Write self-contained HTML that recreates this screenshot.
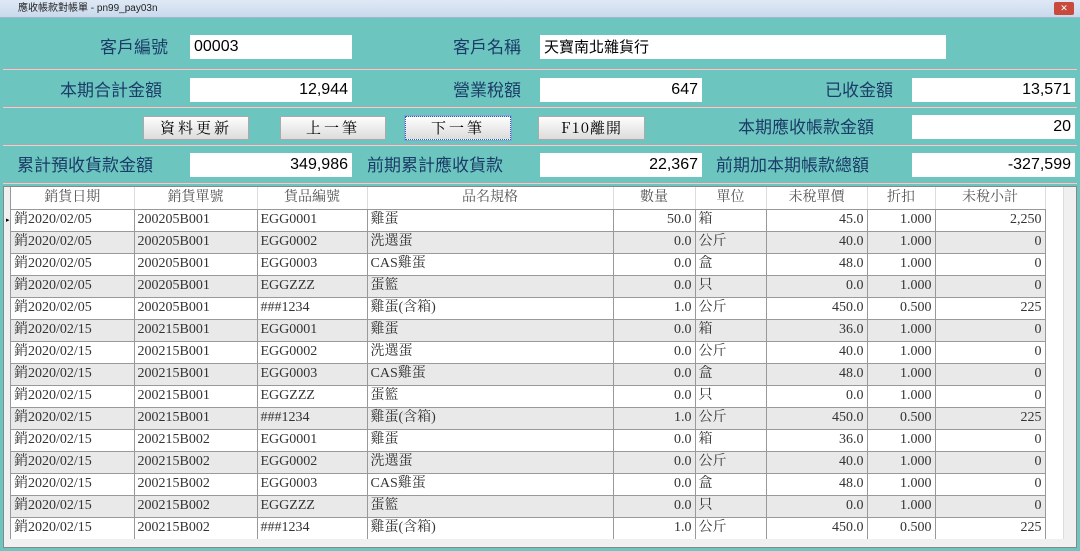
<!DOCTYPE html>
<html><head><meta charset="utf-8"><style>
*{margin:0;padding:0;box-sizing:border-box}
body{width:1080px;height:551px;overflow:hidden;background:#6dc5c0;font-family:"Liberation Sans","Noto Sans CJK TC",sans-serif;position:relative}
.title{position:absolute;left:0;top:0;width:1080px;height:18px;background:linear-gradient(#dfe9f5,#c9d9ec);font-size:10px;color:#222;line-height:18px;padding-left:18px;border-bottom:1px solid #9fb5cc}
.x{position:absolute;right:6px;top:2px;width:20px;height:13px;background:#c9493c;border-radius:2px;color:#fff;font-size:9px;text-align:center;line-height:13px}
.sep{position:absolute;left:3px;width:1074px;height:2px;background:#a9a9a9;border-bottom:1px solid #d8d8d8}
.lbl{position:absolute;font-size:17px;color:#1b3c66;font-family:"Noto Sans CJK TC",sans-serif;line-height:24px;white-space:nowrap}
.inp{position:absolute;height:24px;background:#fff;font-size:16px;line-height:24px;padding:0 4px;color:#000}
.r{text-align:right}
.btn{position:absolute;height:24px;background:linear-gradient(#fdfdfd,#dcdcdc);border:1px solid #aaa;font-family:"Noto Serif CJK SC",serif;font-size:15px;text-align:center;line-height:22px;letter-spacing:3px}
.grid{position:absolute;left:3px;top:186px;width:1074px;height:362px;background:#fff;border:1px solid #888;overflow:hidden}
table{border-collapse:collapse;position:absolute;left:7px;top:0;font-family:"Liberation Serif","Noto Serif CJK SC",serif;font-size:14px;table-layout:fixed}
td{height:22px;line-height:20px;border-right:1px solid #999;border-bottom:1px solid #999;padding:0 3px;white-space:nowrap;overflow:hidden;color:#333;vertical-align:middle}
th{height:22px;line-height:20px;font-weight:normal;color:#555;border-right:1px solid #ddd;border-bottom:1px solid #999;font-size:14px}
tbody tr:nth-child(even) td{background:#e9e9e9}
.vs{position:absolute;left:1059px;top:0;width:14px;height:353px;background:#f0f0f0;border-left:1px solid #ddd}
.hs{position:absolute;left:0;top:352px;width:1074px;height:9px;background:#f0f0f0}
</style></head><body>
<div class="title">應收帳款對帳單 - pn99_pay03n<div class="x">✕</div></div>
<div class="sep" style="top:68px"></div>
<div class="sep" style="top:106px"></div>
<div class="sep" style="top:144px"></div>
<div class="sep" style="top:182px"></div>

<div class="lbl" style="left:100px;top:34px">客戶編號</div>
<div class="inp" style="left:190px;top:35px;width:162px">00003</div>
<div class="lbl" style="left:453px;top:34px">客戶名稱</div>
<div class="inp" style="left:540px;top:35px;width:406px;font-family:'Noto Sans CJK TC',sans-serif;font-size:15px">天寶南北雜貨行</div>

<div class="lbl" style="left:60px;top:77px">本期合計金額</div>
<div class="inp r" style="left:190px;top:78px;width:162px">12,944</div>
<div class="lbl" style="left:453px;top:77px">營業稅額</div>
<div class="inp r" style="left:540px;top:78px;width:162px">647</div>
<div class="lbl" style="left:825px;top:77px">已收金額</div>
<div class="inp r" style="left:912px;top:78px;width:163px">13,571</div>

<div class="btn" style="left:143px;top:116px;width:106px">資料更新</div>
<div class="btn" style="left:280px;top:116px;width:106px">上一筆</div>
<div class="btn" style="left:405px;top:116px;width:106px;border:1px dotted #2a5fa8;outline:1px solid #7aa6d8">下一筆</div>
<div class="btn" style="left:538px;top:116px;width:107px;letter-spacing:1px">F10離開</div>
<div class="lbl" style="left:738px;top:114px">本期應收帳款金額</div>
<div class="inp r" style="left:912px;top:115px;width:163px">20</div>

<div class="lbl" style="left:17px;top:152px">累計預收貨款金額</div>
<div class="inp r" style="left:190px;top:153px;width:162px">349,986</div>
<div class="lbl" style="left:367px;top:152px">前期累計應收貨款</div>
<div class="inp r" style="left:540px;top:153px;width:162px">22,367</div>
<div class="lbl" style="left:716px;top:152px">前期加本期帳款總額</div>
<div class="inp r" style="left:912px;top:153px;width:163px">-327,599</div>

<div class="grid">
<div style="position:absolute;left:0;top:0;width:7px;height:353px;background:#f0f0f0;border-right:1px solid #999"></div>
<div style="position:absolute;left:2px;top:29px;font-size:7px;color:#000">▸</div>
<table>
<colgroup><col style="width:123px"><col style="width:123px"><col style="width:110px"><col style="width:246px"><col style="width:82px"><col style="width:71px"><col style="width:101px"><col style="width:68px"><col style="width:110px"></colgroup>
<thead><tr><th>銷貨日期</th><th>銷貨單號</th><th>貨品編號</th><th>品名規格</th><th>數量</th><th>單位</th><th>未稅單價</th><th>折扣</th><th>未稅小計</th></tr></thead>
<tbody>
<tr><td>銷2020/02/05</td><td>200205B001</td><td>EGG0001</td><td>雞蛋</td><td class="r">50.0</td><td>箱</td><td class="r">45.0</td><td class="r">1.000</td><td class="r">2,250</td></tr>
<tr><td>銷2020/02/05</td><td>200205B001</td><td>EGG0002</td><td>洗選蛋</td><td class="r">0.0</td><td>公斤</td><td class="r">40.0</td><td class="r">1.000</td><td class="r">0</td></tr>
<tr><td>銷2020/02/05</td><td>200205B001</td><td>EGG0003</td><td>CAS雞蛋</td><td class="r">0.0</td><td>盒</td><td class="r">48.0</td><td class="r">1.000</td><td class="r">0</td></tr>
<tr><td>銷2020/02/05</td><td>200205B001</td><td>EGGZZZ</td><td>蛋籃</td><td class="r">0.0</td><td>只</td><td class="r">0.0</td><td class="r">1.000</td><td class="r">0</td></tr>
<tr><td>銷2020/02/05</td><td>200205B001</td><td>###1234</td><td>雞蛋(含箱)</td><td class="r">1.0</td><td>公斤</td><td class="r">450.0</td><td class="r">0.500</td><td class="r">225</td></tr>
<tr><td>銷2020/02/15</td><td>200215B001</td><td>EGG0001</td><td>雞蛋</td><td class="r">0.0</td><td>箱</td><td class="r">36.0</td><td class="r">1.000</td><td class="r">0</td></tr>
<tr><td>銷2020/02/15</td><td>200215B001</td><td>EGG0002</td><td>洗選蛋</td><td class="r">0.0</td><td>公斤</td><td class="r">40.0</td><td class="r">1.000</td><td class="r">0</td></tr>
<tr><td>銷2020/02/15</td><td>200215B001</td><td>EGG0003</td><td>CAS雞蛋</td><td class="r">0.0</td><td>盒</td><td class="r">48.0</td><td class="r">1.000</td><td class="r">0</td></tr>
<tr><td>銷2020/02/15</td><td>200215B001</td><td>EGGZZZ</td><td>蛋籃</td><td class="r">0.0</td><td>只</td><td class="r">0.0</td><td class="r">1.000</td><td class="r">0</td></tr>
<tr><td>銷2020/02/15</td><td>200215B001</td><td>###1234</td><td>雞蛋(含箱)</td><td class="r">1.0</td><td>公斤</td><td class="r">450.0</td><td class="r">0.500</td><td class="r">225</td></tr>
<tr><td>銷2020/02/15</td><td>200215B002</td><td>EGG0001</td><td>雞蛋</td><td class="r">0.0</td><td>箱</td><td class="r">36.0</td><td class="r">1.000</td><td class="r">0</td></tr>
<tr><td>銷2020/02/15</td><td>200215B002</td><td>EGG0002</td><td>洗選蛋</td><td class="r">0.0</td><td>公斤</td><td class="r">40.0</td><td class="r">1.000</td><td class="r">0</td></tr>
<tr><td>銷2020/02/15</td><td>200215B002</td><td>EGG0003</td><td>CAS雞蛋</td><td class="r">0.0</td><td>盒</td><td class="r">48.0</td><td class="r">1.000</td><td class="r">0</td></tr>
<tr><td>銷2020/02/15</td><td>200215B002</td><td>EGGZZZ</td><td>蛋籃</td><td class="r">0.0</td><td>只</td><td class="r">0.0</td><td class="r">1.000</td><td class="r">0</td></tr>
<tr><td>銷2020/02/15</td><td>200215B002</td><td>###1234</td><td>雞蛋(含箱)</td><td class="r">1.0</td><td>公斤</td><td class="r">450.0</td><td class="r">0.500</td><td class="r">225</td></tr>
</tbody></table>
<div class="vs"></div>
<div class="hs"></div>
</div>
</body></html>
